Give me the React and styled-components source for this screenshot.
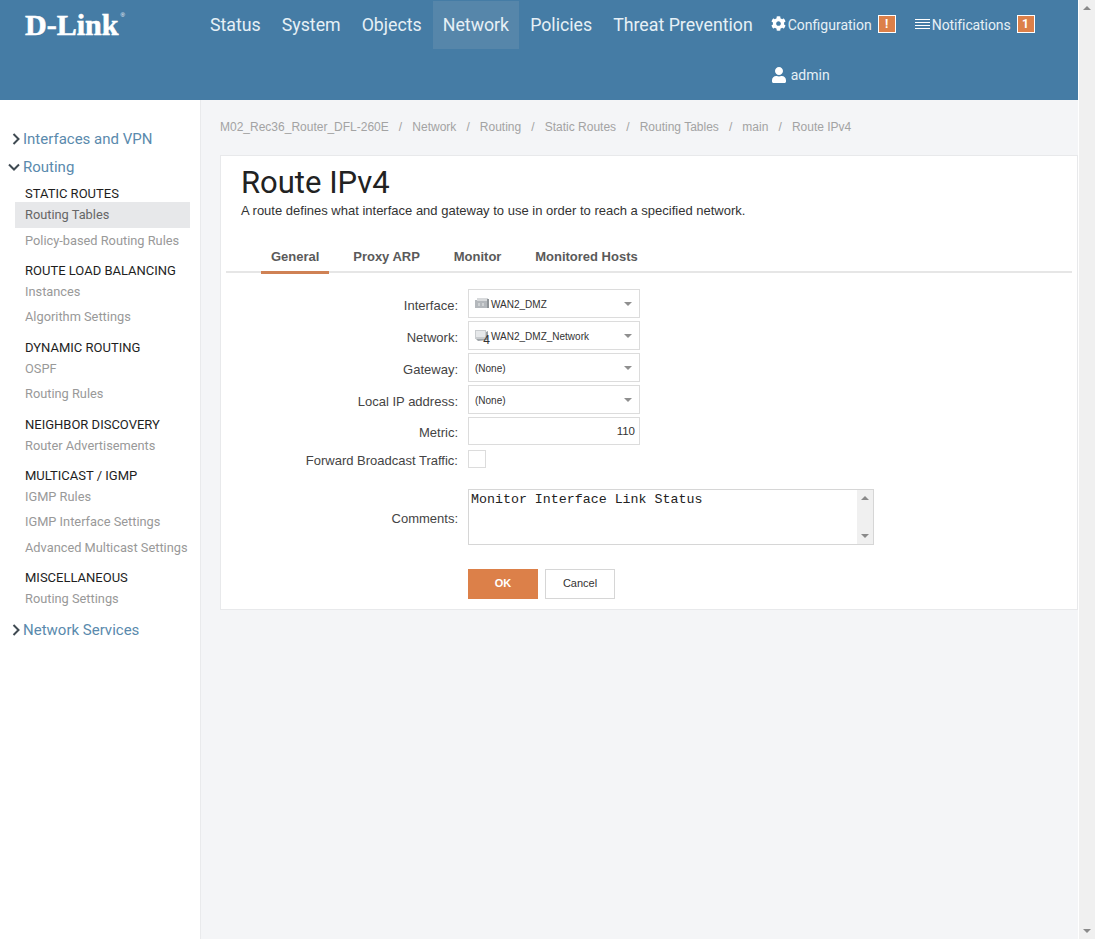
import React from 'react'
import styled, { createGlobalStyle } from 'styled-components'
import { FaCog, FaUser } from 'react-icons/fa'

const GlobalStyle = createGlobalStyle`
    html, body {
        margin: 0;
        padding: 0;
        height: 100%;
        overflow: hidden;
    }
    body {
        font-family: Roboto, "Liberation Sans", Arial, sans-serif;
        background: #fff;
    }
`

const navItems = ['Status', 'System', 'Objects', 'Network', 'Policies', 'Threat Prevention']

const sideGroups = [
    { title: 'STATIC ROUTES', items: ['Routing Tables', 'Policy-based Routing Rules'] },
    { title: 'ROUTE LOAD BALANCING', items: ['Instances', 'Algorithm Settings'] },
    { title: 'DYNAMIC ROUTING', items: ['OSPF', 'Routing Rules'] },
    { title: 'NEIGHBOR DISCOVERY', items: ['Router Advertisements'] },
    { title: 'MULTICAST / IGMP', items: ['IGMP Rules', 'IGMP Interface Settings', 'Advanced Multicast Settings'] },
    { title: 'MISCELLANEOUS', items: ['Routing Settings'] },
]

const crumbs = ['M02_Rec36_Router_DFL-260E', 'Network', 'Routing', 'Static Routes', 'Routing Tables', 'main', 'Route IPv4']

const tabs = ['General', 'Proxy ARP', 'Monitor', 'Monitored Hosts']

const Chevron = ({ open }) => (
    <ChevronBox $open={open}>
        <svg width="12" height="12" viewBox="0 0 12 12" fill="none" stroke="#3f4a52" strokeWidth="2">
            {open ? <path d="M1 3.5 L6 8.5 L11 3.5" /> : <path d="M3.5 1 L8.5 6 L3.5 11" />}
        </svg>
    </ChevronBox>
)

const InterfaceIcon = () => (
    <svg width="14" height="14" viewBox="0 0 14 14">
        <rect x="0" y="3" width="12" height="8" fill="#b4b8bc" />
        <rect x="2" y="1" width="11" height="3" fill="#d8dadc" />
        <rect x="12" y="2" width="2" height="9" fill="#8f9498" />
        <rect x="3" y="6" width="2" height="3" fill="#cfd2d4" />
        <rect x="7" y="6" width="2" height="3" fill="#cfd2d4" />
    </svg>
)

const NetworkIcon = () => (
    <IconWrap>
        <svg width="14" height="14" viewBox="0 0 14 14">
            <rect x="0" y="1" width="11" height="9" fill="#c9cccf" />
            <rect x="1" y="2" width="9" height="6" fill="#e6e8ea" />
            <path d="M11 3 L13 2 L13 11 L3 12 L1 10 L11 10 Z" fill="#9ea3a7" />
        </svg>
        <Four>4</Four>
    </IconWrap>
)

const Select = ({ icon, value }) => (
    <SelectBox>
        {icon}
        <SelectValue>{value}</SelectValue>
        <Caret />
    </SelectBox>
)

const App = () => {
    return (
        <Page>
            <GlobalStyle />
            <Main>
                <Header>
                    <Logo>D-Link<sup>®</sup></Logo>
                    <Nav>
                        {navItems.map((n) => (
                            <NavItem key={n} $active={n === 'Network'}>{n}</NavItem>
                        ))}
                    </Nav>
                    <UserArea>
                        <Tool>
                            <ToolIcon><FaCog size={15} /></ToolIcon>
                            <ToolText>Configuration</ToolText>
                            <Badge>!</Badge>
                        </Tool>
                        <Tool>
                            <ToolIcon>
                                <svg width="15" height="11" viewBox="0 0 15 11" stroke="#fff" strokeWidth="1">
                                    <path d="M0 1.5 H15 M0 4.5 H15 M0 7.5 H15 M0 10.5 H15" />
                                </svg>
                            </ToolIcon>
                            <ToolText $narrow>Notifications</ToolText>
                            <Badge>1</Badge>
                        </Tool>
                        <Admin>
                            <FaUser size={16} />
                            <AdminText>admin</AdminText>
                        </Admin>
                    </UserArea>
                </Header>
                <Body>
                    <Sidebar>
                        <TopItem><Chevron />Interfaces and VPN</TopItem>
                        <TopItem><Chevron open />Routing</TopItem>
                        <Groups>
                            {sideGroups.map((g) => (
                                <Group key={g.title}>
                                    <GroupTitle>{g.title}</GroupTitle>
                                    {g.items.map((i) => (
                                        <SideLink key={i} $active={i === 'Routing Tables'}>{i}</SideLink>
                                    ))}
                                </Group>
                            ))}
                        </Groups>
                        <TopItem><Chevron />Network Services</TopItem>
                    </Sidebar>
                    <Content>
                        <Breadcrumb>
                            {crumbs.map((c, i) => (
                                <React.Fragment key={c}>
                                    {i > 0 && <Slash>/</Slash>}
                                    <span>{c}</span>
                                </React.Fragment>
                            ))}
                        </Breadcrumb>
                        <Card>
                            <Title>Route IPv4</Title>
                            <Description>A route defines what interface and gateway to use in order to reach a specified network.</Description>
                            <Tabs>
                                {tabs.map((t) => (
                                    <Tab key={t} $active={t === 'General'}>{t}</Tab>
                                ))}
                            </Tabs>
                            <Form>
                                <Label>Interface:</Label>
                                <Select icon={<InterfaceIcon />} value="WAN2_DMZ" />
                                <Label>Network:</Label>
                                <Select icon={<NetworkIcon />} value="WAN2_DMZ_Network" />
                                <Label>Gateway:</Label>
                                <Select value="(None)" />
                                <Label>Local IP address:</Label>
                                <Select value="(None)" />
                                <PlainLabel>Metric:</PlainLabel>
                                <NumberBox>110</NumberBox>
                                <PlainLabel>Forward Broadcast Traffic:</PlainLabel>
                                <CheckBox />
                                <CommentLabel>Comments:</CommentLabel>
                                <TextArea>
                                    <TextAreaText>Monitor Interface Link Status</TextAreaText>
                                    <AreaScroll>
                                        <ArrowUp />
                                        <ArrowDown />
                                    </AreaScroll>
                                </TextArea>
                                <Buttons>
                                    <OkButton>OK</OkButton>
                                    <CancelButton>Cancel</CancelButton>
                                </Buttons>
                            </Form>
                        </Card>
                    </Content>
                </Body>
            </Main>
            <Scrollbar>
                <ArrowUp />
                <ArrowDown />
            </Scrollbar>
        </Page>
    )
}

export default App

const Page = styled.div`
    display: flex;
    width: 1095px;
    height: 939px;
    overflow: hidden;
`
const Main = styled.div`
    width: 1078px;
    display: flex;
    flex-direction: column;
`
const Scrollbar = styled.div`
    width: 16px;
    border-left: 1px solid #fff;
    background: #f0f0f0;
    display: flex;
    flex-direction: column;
    align-items: center;
    justify-content: space-between;
    padding: 6px 0;
    box-sizing: content-box;
    height: 927px;
`
const ArrowUp = styled.div`
    width: 0;
    height: 0;
    border-left: 4px solid transparent;
    border-right: 4px solid transparent;
    border-bottom: 4px solid #8a8a8a;
`
const ArrowDown = styled.div`
    width: 0;
    height: 0;
    border-left: 4px solid transparent;
    border-right: 4px solid transparent;
    border-top: 4px solid #8a8a8a;
`
const Header = styled.header`
    height: 100px;
    background: #457ca5;
    display: flex;
    color: #e6f0f6;
`
const Logo = styled.div`
    width: 200px;
    padding: 9px 0 0 25px;
    box-sizing: border-box;
    font-family: "Liberation Serif", serif;
    font-weight: 700;
    font-size: 30px;
    line-height: 32px;
    -webkit-text-stroke: 0.6px #fff;
    color: #fff;

    sup {
        margin-left: 2px;
        font-family: "Liberation Sans", sans-serif;
        font-size: 6px;
        font-weight: 400;
        vertical-align: 18px;
        line-height: 0;
        -webkit-text-stroke: 0;
    }
`
const Nav = styled.nav`
    display: flex;
    align-self: flex-start;
    margin-top: 1px;
`
const NavItem = styled.div`
    height: 48px;
    line-height: 48px;
    padding: 0 10px;
    margin-right: 1px;
    font-size: 17.75px;
    color: #e6f0f6;
    background: ${(p) => (p.$active ? '#5686aa' : 'transparent')};
`
const UserArea = styled.div`
    display: grid;
    grid-template-columns: 144px auto;
    grid-template-rows: 50px 50px;
    margin-left: 7px;
`
const Tool = styled.div`
    display: flex;
    align-items: center;
    color: #fff;
    height: 50px;
`
const ToolIcon = styled.span`
    display: inline-flex;
    margin-top: -4px;
`
const ToolText = styled.span`
    margin-left: 2px;
    font-size: 14px;
    letter-spacing: ${(p) => (p.$narrow ? '-0.1px' : '0')};
    color: #e6f0f6;
`
const Badge = styled.span`
    width: 16px;
    height: 16px;
    margin-left: 6px;
    margin-top: -2px;
    border: 1px solid #fff;
    background: #dc8049;
    color: #fff;
    font-size: 12px;
    font-weight: 700;
    line-height: 16px;
    text-align: center;
`
const Admin = styled.div`
    display: flex;
    align-items: center;
    color: #fff;
`
const AdminText = styled.span`
    margin-left: 4px;
    font-size: 14px;
    color: #e6f0f6;
`
const Body = styled.div`
    flex: 1;
    display: flex;
`
const Sidebar = styled.aside`
    width: 201px;
    box-sizing: border-box;
    border-right: 1px solid #e9eaec;
    padding-top: 25px;
    background: #fff;
`
const ChevronBox = styled.span`
    display: inline-flex;
    width: 12px;
    margin-right: 1px;
    margin-left: ${(p) => (p.$open ? '-2px' : '0')};
    padding-right: ${(p) => (p.$open ? '2px' : '0')};
`
const TopItem = styled.div`
    height: 28px;
    display: flex;
    align-items: center;
    padding-left: 10px;
    font-size: 15px;
    color: #5a8aad;
`
const Groups = styled.div`
    padding: 3px 0 0 15px;
    margin-top: 2px;
    margin-bottom: -6px;
`
const Group = styled.div`
    margin-bottom: 9.85px;
    width: 175px;
`
const GroupTitle = styled.div`
    height: 16px;
    line-height: 16px;
    padding-left: 10px;
    font-size: 13px;
    color: #1e1e1e;
    white-space: nowrap;
`
const SideLink = styled.div`
    height: 25.5px;
    line-height: 25.5px;
    padding-left: 10px;
    font-size: 12.8px;
    white-space: nowrap;
    color: ${(p) => (p.$active ? '#666' : '#999')};
    background: ${(p) => (p.$active ? '#e7e8ea' : 'transparent')};
`
const Content = styled.main`
    flex: 1;
    background: #f4f5f7;
    padding: 18px 0 0 19px;
`
const Breadcrumb = styled.div`
    height: 18px;
    line-height: 18px;
    font-family: "Liberation Sans", sans-serif;
    font-size: 12px;
    color: #a3a3a3;
    white-space: nowrap;
`
const Slash = styled.span`
    margin: 0 10.1px;
`
const Card = styled.section`
    margin-top: 19px;
    height: 455px;
    box-sizing: border-box;
    background: #fff;
    border: 1px solid #e8e9eb;
    padding: 10px 5px 0 5px;
`
const Title = styled.h1`
    margin: 0 0 0 15px;
    font-size: 31px;
    line-height: 34px;
    font-weight: 400;
    color: #222;
`
const Description = styled.p`
    margin: 2px 0 0 15px;
    font-family: "Liberation Sans", sans-serif;
    font-size: 13px;
    line-height: 17px;
    color: #333;
`
const Tabs = styled.div`
    display: flex;
    height: 30px;
    margin-top: 22px;
    padding-left: 35px;
    border-bottom: 2px solid #e6e6e6;
`
const Tab = styled.div`
    padding: 0 10px;
    margin-right: 13.8px;
    height: 33px;
    line-height: 31px;
    box-sizing: border-box;
    font-family: "Liberation Sans", sans-serif;
    font-size: 13px;
    font-weight: 700;
    color: #5a5a5a;
    border-bottom: 3px solid ${(p) => (p.$active ? '#cf8154' : 'transparent')};
`
const Form = styled.div`
    display: grid;
    grid-template-columns: 232px auto;
    column-gap: 10px;
    row-gap: 3px;
    margin-top: 16px;
    justify-content: start;
    align-items: center;
`
const Label = styled.div`
    text-align: right;
    padding-top: 4px;
    font-family: "Liberation Sans", sans-serif;
    font-size: 13px;
    color: #444;
`
const PlainLabel = styled(Label)`
    padding-top: 2px;
`
const CommentLabel = styled(PlainLabel)`
    margin-top: 16px;
`
const SelectBox = styled.div`
    width: 172px;
    height: 29px;
    box-sizing: border-box;
    border: 1px solid #dcdcdc;
    display: flex;
    align-items: center;
    padding: 0 7px 0 6px;
`
const IconWrap = styled.span`
    position: relative;
    display: inline-flex;
`
const Four = styled.span`
    position: absolute;
    right: -1px;
    bottom: -3px;
    font-family: "Liberation Sans", sans-serif;
    font-size: 12px;
    line-height: 12px;
    color: #333;
`
const SelectValue = styled.span`
    flex: 1;
    margin-left: 2px;
    padding-top: 1px;
    font-family: "Liberation Sans", sans-serif;
    font-size: 10px;
    color: #333;
    &:first-child {
        margin-left: 0;
    }
`
const Caret = styled.span`
    width: 0;
    height: 0;
    border-left: 4px solid transparent;
    border-right: 4px solid transparent;
    border-top: 4px solid #8f8f8f;
`
const NumberBox = styled.div`
    width: 172px;
    height: 28px;
    box-sizing: border-box;
    border: 1px solid #dcdcdc;
    line-height: 26px;
    text-align: right;
    padding-right: 4px;
    font-family: "Liberation Sans", sans-serif;
    font-size: 11.5px;
    color: #333;
`
const CheckBox = styled.div`
    width: 18px;
    height: 18px;
    box-sizing: border-box;
    border: 1px solid #dcdcdc;
    margin: 2px 0;
`
const TextArea = styled.div`
    width: 406px;
    height: 56px;
    margin-top: 16px;
    box-sizing: border-box;
    border: 1px solid #d6d6d6;
    display: flex;
`
const TextAreaText = styled.div`
    flex: 1;
    padding: 2px 2px;
    font-family: "Liberation Mono", monospace;
    font-size: 13.3px;
    line-height: 15px;
    color: #222;
    white-space: pre;
`
const AreaScroll = styled.div`
    width: 16px;
    background: #f0f0f0;
    display: flex;
    flex-direction: column;
    align-items: center;
    justify-content: space-between;
    padding: 6px 0;
`
const Buttons = styled.div`
    grid-column: 2;
    display: flex;
    gap: 7px;
    margin-top: 21px;
`
const OkButton = styled.div`
    width: 70px;
    height: 30px;
    background: #dc8049;
    color: #fff;
    font-family: "Liberation Sans", sans-serif;
    font-size: 11px;
    font-weight: 700;
    line-height: 28px;
    text-align: center;
`
const CancelButton = styled.div`
    width: 70px;
    height: 30px;
    box-sizing: border-box;
    border: 1px solid #d6d6d6;
    color: #333;
    font-family: "Liberation Sans", sans-serif;
    font-size: 11px;
    line-height: 26px;
    text-align: center;
`
